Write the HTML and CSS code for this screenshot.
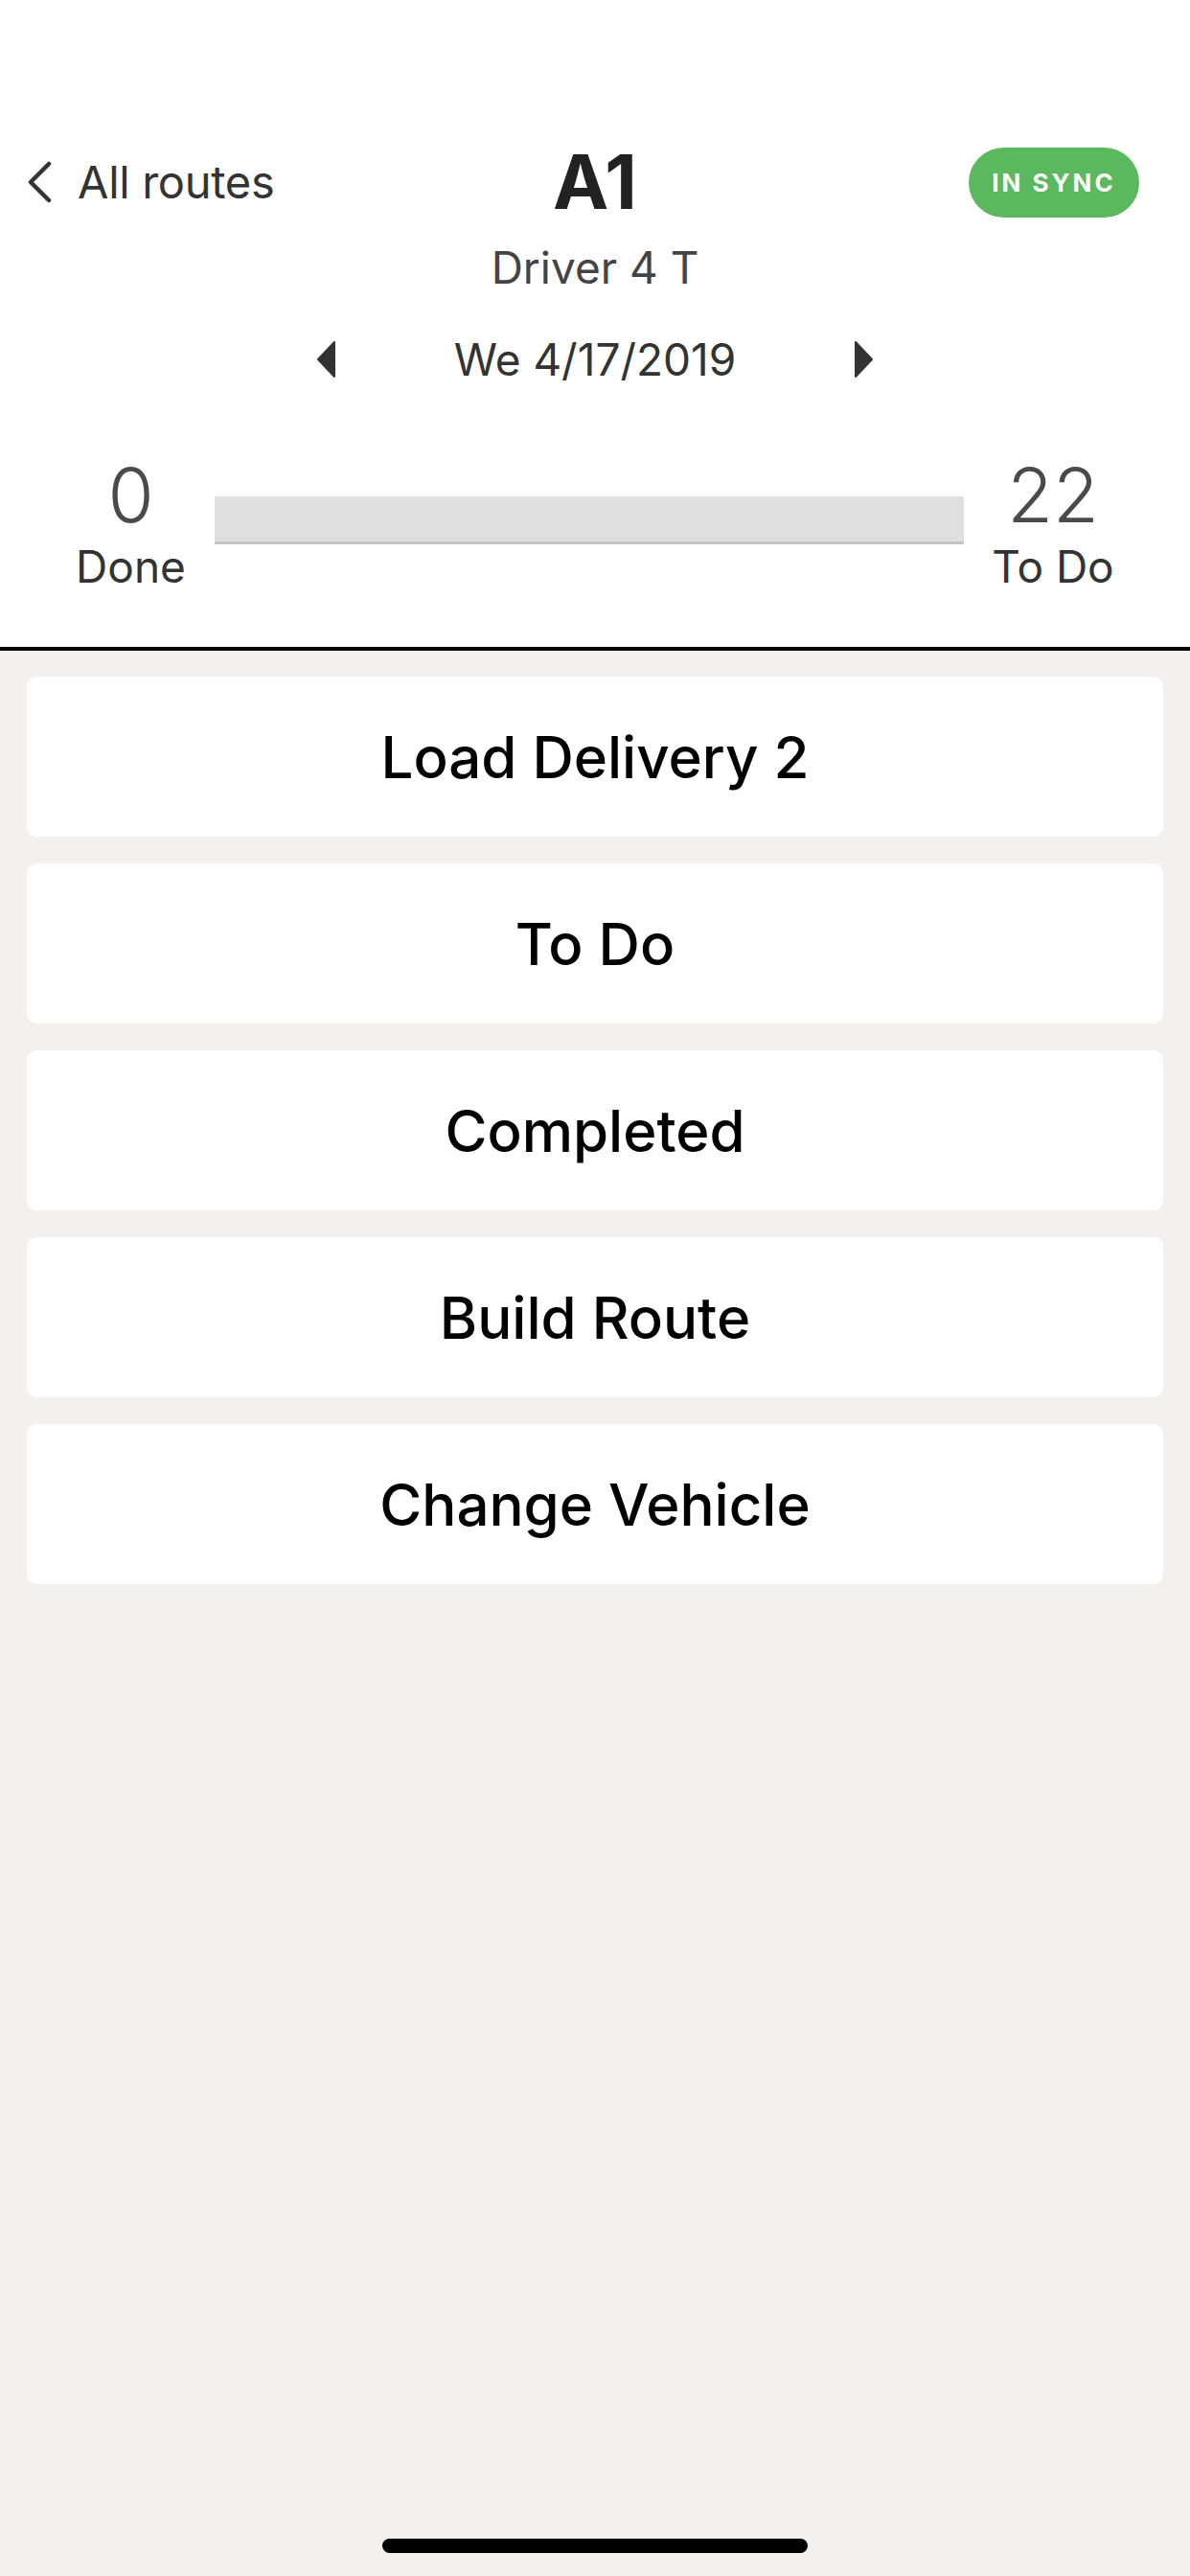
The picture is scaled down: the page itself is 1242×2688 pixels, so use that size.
FILE: index.html
```html
<!DOCTYPE html>
<html lang="en">
<head>
    <meta charset="UTF-8">
    <meta name="viewport" content="width=device-width, initial-scale=1.0">
    <title>A1 - Route</title>
    <link rel="stylesheet" href="styles.css">
</head>
<body>
    <div class="page">
        <header class="header">
            <div class="top-row">
                <a class="back" href="#">
                    <svg class="back-icon" width="28" height="44" viewBox="0 0 28 44">
                        <polyline points="24,3 5,22 24,41" fill="none" stroke="#333" stroke-width="4.5" stroke-linecap="round" stroke-linejoin="round"/>
                    </svg>
                    <span>All routes</span>
                </a>
                <h1 class="title">A1</h1>
                <div class="sync-cell">
                    <span class="badge">IN SYNC</span>
                </div>
            </div>

            <div class="driver">Driver 4 T</div>

            <div class="date-row">
                <svg class="arrow" width="20" height="38" viewBox="0 0 20 38">
                    <polygon points="19,1 19,37 2,19" fill="#333" stroke="#333" stroke-width="2" stroke-linejoin="round"/>
                </svg>
                <span class="date">We 4/17/2019</span>
                <svg class="arrow" width="20" height="38" viewBox="0 0 20 38">
                    <polygon points="1,1 1,37 18,19" fill="#333" stroke="#333" stroke-width="2" stroke-linejoin="round"/>
                </svg>
            </div>

            <div class="stats">
                <div class="stat">
                    <div class="stat-num">0</div>
                    <div class="stat-label">Done</div>
                </div>
                <div class="progress">
                    <div class="progress-fill" style="width: 0%"></div>
                </div>
                <div class="stat">
                    <div class="stat-num">22</div>
                    <div class="stat-label">To Do</div>
                </div>
            </div>
        </header>

        <div class="menu">
            <button class="menu-item">Load Delivery 2</button>
            <button class="menu-item">To Do</button>
            <button class="menu-item">Completed</button>
            <button class="menu-item">Build Route</button>
            <button class="menu-item">Change Vehicle</button>
        </div>

        <div class="home-bar"></div>
    </div>
</body>
</html>
```

FILE: styles.css
```css
body {
    margin: 0;
    font-family: Inter, "Noto Sans", Roboto, sans-serif;
    background-color: #f3f0ef;
    color: #333;
}

.page {
    width: 1242px;
    min-height: 2688px;
    display: flex;
    flex-direction: column;
}

/* header */

.header {
    background-color: #ffffff;
    border-bottom: 4px solid #000;
    height: 531px;
    padding-top: 144px;
}

.top-row {
    display: grid;
    grid-template-columns: 1fr auto 1fr;
    align-items: center;
    height: 92px;
}

.back {
    display: flex;
    align-items: center;
    gap: 26px;
    padding-left: 27px;
    color: #333;
    text-decoration: none;
    font-size: 47px;
    line-height: 92px;
    letter-spacing: -0.3px;
}

.title {
    margin: 0;
    font-size: 78px;
    font-weight: 700;
    line-height: 92px;
    color: #222;
}

.sync-cell {
    display: flex;
    justify-content: flex-end;
    padding-right: 53px;
}

.badge {
    display: flex;
    align-items: center;
    justify-content: center;
    width: 178px;
    height: 73px;
    border-radius: 37px;
    background-color: #5cb85f;
    color: #ffffff;
    font-size: 26px;
    font-weight: 700;
    letter-spacing: 3px;
}

.driver {
    margin-top: 17px;
    text-align: center;
    font-size: 46px;
    line-height: 52px;
    color: #444;
}

.date-row {
    margin-top: 44px;
    height: 52px;
    display: flex;
    align-items: center;
    justify-content: center;
    gap: 124px;
}

.date {
    font-size: 46px;
    line-height: 52px;
    color: #333;
}

/* progress */

.stats {
    margin-top: 74px;
    display: grid;
    grid-template-columns: 175px 1fr 186px;
    padding: 0 50px 0 49px;
    align-items: start;
}

.stat {
    text-align: center;
    color: #4a4a4a;
}

.stat-num {
    font-size: 78px;
    font-weight: 300;
    line-height: 84px;
}

.stat-label {
    margin-top: 8px;
    font-size: 46px;
    line-height: 48px;
    color: #333;
}

.progress {
    margin-top: 43px;
    height: 47px;
    background-color: #dfdfdf;
    border-bottom: 3px solid #c4c4c4;
}

.progress-fill {
    height: 100%;
    background-color: #5cb85f;
}

/* menu */

.menu {
    display: flex;
    flex-direction: column;
    gap: 28px;
    padding: 27px 28px 0;
}

.menu-item {
    height: 167px;
    border: none;
    border-radius: 10px;
    background-color: #ffffff;
    font-family: Inter, "Noto Sans", Roboto, sans-serif;
    font-size: 60px;
    font-weight: 500;
    color: #000;
    cursor: pointer;
}

.home-bar {
    margin: auto auto 24px;
    width: 444px;
    height: 15px;
    border-radius: 8px;
    background-color: #000;
}
```
